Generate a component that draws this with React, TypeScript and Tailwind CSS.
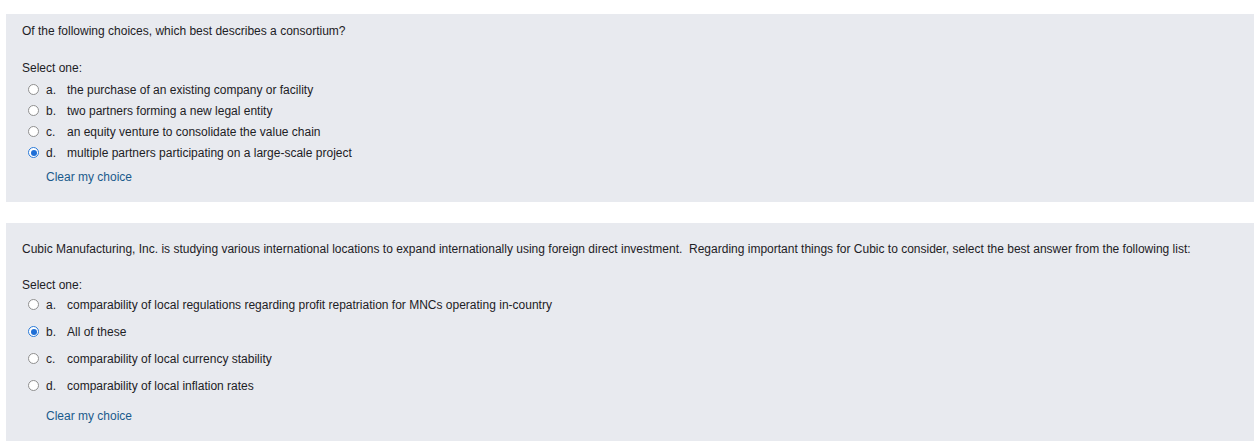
import React from 'react';

type Q = {
  text: string;
  options: string[];
  selected: number;
};

const questions: Q[] = [
  {
    text: 'Of the following choices, which best describes a consortium?',
    options: [
      'the purchase of an existing company or facility',
      'two partners forming a new legal entity',
      'an equity venture to consolidate the value chain',
      'multiple partners participating on a large-scale project',
    ],
    selected: 3,
  },
  {
    text: 'Cubic Manufacturing, Inc. is studying various international locations to expand internationally using foreign direct investment.\u00a0 Regarding important things for Cubic to consider, select the best answer from the following list:',
    options: [
      'comparability of local regulations regarding profit repatriation for MNCs operating in-country',
      'All of these',
      'comparability of local currency stability',
      'comparability of local inflation rates',
    ],
    selected: 1,
  },
];

function Radio({ checked }: { checked: boolean }) {
  if (checked) {
    return (
      <span className="flex h-[11px] w-[11px] items-center justify-center rounded-full border border-[#2a7ad8] bg-white">
        <span className="h-[6px] w-[6px] rounded-full bg-[#1f6fd6]" />
      </span>
    );
  }
  return <span className="h-[11px] w-[11px] rounded-full border border-[#8f8f8f] bg-white" />;
}

function Question({ q, first }: { q: Q; first: boolean }) {
  const letters = ['a.', 'b.', 'c.', 'd.'];
  return (
    <div className={`bg-[#e8eaef] pl-4 pb-[17px] ${first ? 'pt-[9px]' : 'pt-[18px]'}`}>
      <p className="h-[16px] leading-[16px]">{q.text}</p>
      <p className={`h-[16px] leading-[16px] ${first ? 'mt-[21px]' : 'mt-[20px]'}`}>Select one:</p>
      <div className={`flex flex-col ${first ? 'mt-[3px] gap-0' : 'mt-[1px] gap-[6px]'}`}>
        {q.options.map((o, i) => (
          <div key={i} className="flex h-[21px] items-center">
            <span className="ml-[6px] flex w-[11px] justify-center">
              <Radio checked={i === q.selected} />
            </span>
            <span className="ml-[7px] w-[21px]">{letters[i]}</span>
            <span>{o}</span>
          </div>
        ))}
      </div>
      <div className={`ml-[24px] h-[16px] leading-[16px] text-[#1a5a8c] ${first ? 'mt-[6px]' : 'mt-[12px]'}`}>
        Clear my choice
      </div>
    </div>
  );
}

export default function App() {
  return (
    <div className="h-[445px] w-[1254px] bg-white pl-[6px] pt-[14px] text-[12px] text-[#1d2125] font-['Liberation_Sans',Arial,sans-serif]">
      <Question q={questions[0]} first />
      <div className="h-[21px]" />
      <Question q={questions[1]} first={false} />
    </div>
  );
}
